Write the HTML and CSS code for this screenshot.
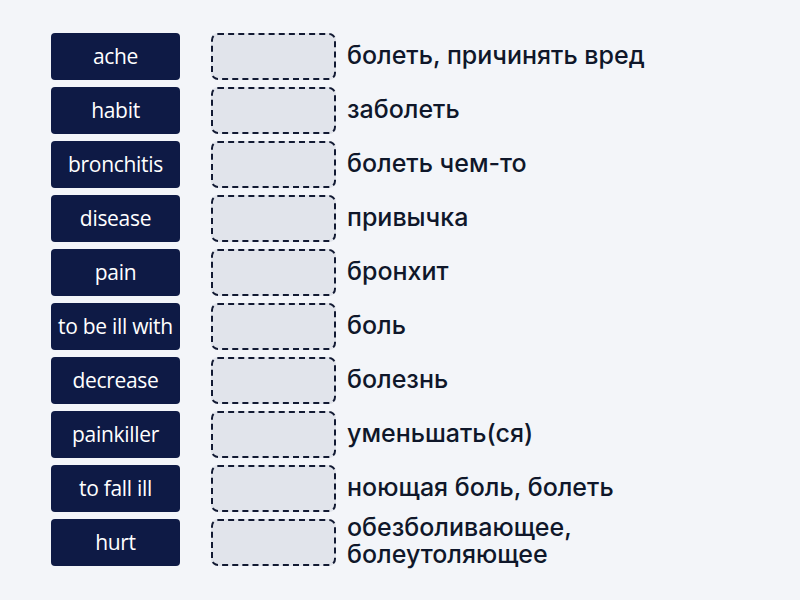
FILE: index.html
```html
<!DOCTYPE html>
<html>
<head>
<meta charset="utf-8">
<link rel="stylesheet" href="styles.css">
</head>
<body>
<div class="board">
  <div class="card">ache</div><div class="slot"></div><div class="def">болеть, причинять вред</div>
  <div class="card">habit</div><div class="slot"></div><div class="def">заболеть</div>
  <div class="card">bronchitis</div><div class="slot"></div><div class="def">болеть чем-то</div>
  <div class="card">disease</div><div class="slot"></div><div class="def">привычка</div>
  <div class="card">pain</div><div class="slot"></div><div class="def">бронхит</div>
  <div class="card">to be ill with</div><div class="slot"></div><div class="def">боль</div>
  <div class="card">decrease</div><div class="slot"></div><div class="def">болезнь</div>
  <div class="card">painkiller</div><div class="slot"></div><div class="def">уменьшать(ся)</div>
  <div class="card">to fall ill</div><div class="slot"></div><div class="def">ноющая боль, болеть</div>
  <div class="card">hurt</div><div class="slot"></div><div class="def">обезболивающее,<br>болеутоляющее</div>
</div>
</body>
</html>
```
FILE: styles.css
```css
html, body {
  margin: 0;
  padding: 0;
  background: #f3f5f9;
  width: 800px;
  height: 600px;
  overflow: hidden;
}
.board {
  display: grid;
  grid-template-columns: 129px 125px auto;
  grid-auto-rows: 47px;
  row-gap: 7px;
  column-gap: 31px;
  padding: 33px 0 0 51px;
}
.card {
  background: #0e1a45;
  color: #ffffff;
  border-radius: 4px;
  display: flex;
  align-items: center;
  justify-content: center;
  padding-bottom: 2px;
  box-sizing: border-box;
  font-family: "Open Sans", "Noto Sans", sans-serif;
  font-size: 21px;
  letter-spacing: -0.3px;
  white-space: nowrap;
}
.slot {
  box-sizing: border-box;
  background: #e1e4eb;
  border: 2px dashed #121a33;
  border-radius: 7px;
}
.def {
  margin-left: -20px;
  padding-bottom: 3px;
  display: flex;
  align-items: center;
  font-family: "Inter", "Roboto", sans-serif;
  font-size: 25px;
  font-weight: 500;
  line-height: 27px;
  color: #0f172a;
  white-space: nowrap;
}
```
